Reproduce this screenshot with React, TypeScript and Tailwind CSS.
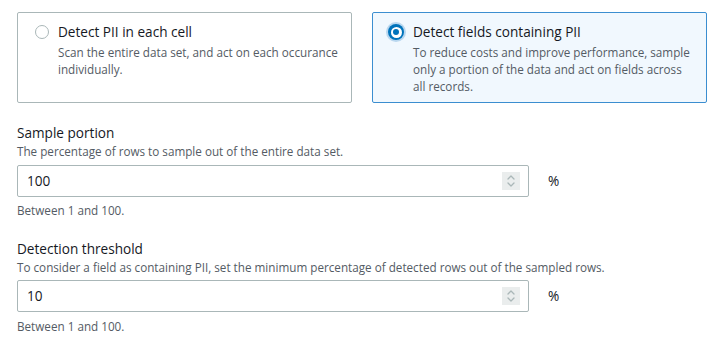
import React from "react";

const font = { fontFamily: '"Open Sans", "Noto Sans", Arial, sans-serif' };

function Spinner() {
  return (
    <div className="flex h-[18px] w-[18px] flex-col items-center justify-center bg-[#eaeded]">
      <svg width="10" height="14" viewBox="0 0 10 14" fill="none" stroke="#aab7b8" strokeWidth="1.3" strokeLinecap="round" strokeLinejoin="round">
        <path d="M2 5 L5 2 L8 5" />
        <path d="M2 9 L5 12 L8 9" />
      </svg>
    </div>
  );
}

function NumberField({ value }: { value: string }) {
  return (
    <div className="flex items-center">
      <div className="flex h-[32px] w-[512px] items-center justify-between rounded-[2px] border border-[#aab7b8] bg-white pl-[9px] pr-[8px]">
        <span className="text-[13.6px] text-[#16191f]">{value}</span>
        <Spinner />
      </div>
      <span className="ml-[19px] text-[13.6px] text-[#16191f]">%</span>
    </div>
  );
}

export default function App() {
  return (
    <div className="h-[347px] w-[725px] bg-white pl-[17px] pt-[12px]" style={font}>
      <div className="flex gap-[20px]">
        <div className="h-[91px] w-[335px] rounded-[2px] border border-[#aab7b8] bg-white pl-[17px] pr-[8px] pt-[9px]">
          <div className="flex items-start gap-[9px]">
            <div className="mt-[3px] h-[14px] w-[14px] shrink-0 rounded-full border border-[#aab7b8] bg-white" />
            <div>
              <div className="text-[13.6px] leading-[20px] text-[#16191f]">Detect PII in each cell</div>
              <div className="mt-[2px] text-[11.7px] leading-[17px] text-[#545b64]">
                Scan the entire data set, and act on each occurance individually.
              </div>
            </div>
          </div>
        </div>
        <div className="h-[91px] w-[335px] rounded-[2px] border border-[#3b8ed0] bg-[#f1f8fe] pl-[13px] pr-[14px] pt-[9px]">
          <div className="flex items-start gap-[7px]">
            <div className="flex h-[20px] w-[20px] shrink-0 items-center justify-center rounded-full bg-[#b9d7ef]">
              <div className="flex h-[16px] w-[16px] items-center justify-center rounded-full bg-[#0073bb]">
                <div className="flex h-[11px] w-[11px] items-center justify-center rounded-full bg-white">
                  <div className="h-[6px] w-[6px] rounded-full bg-[#0073bb]" />
                </div>
              </div>
            </div>
            <div>
              <div className="text-[13.6px] leading-[20px] text-[#16191f]">Detect fields containing PII</div>
              <div className="mt-[2px] text-[11.7px] leading-[17px] text-[#545b64]">
                To reduce costs and improve performance, sample only a portion of the data and act on fields across all records.
              </div>
            </div>
          </div>
        </div>
      </div>

      <div className="mt-[20px] text-[13.6px] leading-[20px] text-[#16191f]">Sample portion</div>
      <div className="text-[11.7px] leading-[16px] text-[#545b64]">The percentage of rows to sample out of the entire data set.</div>
      <div className="mt-[6px]">
        <NumberField value="100" />
      </div>
      <div className="mt-[5px] text-[11.7px] leading-[16px] text-[#545b64]">Between 1 and 100.</div>

      <div className="mt-[21px] text-[13.6px] leading-[20px] text-[#16191f]">Detection threshold</div>
      <div className="text-[11.7px] leading-[16px] text-[#545b64]">
        To consider a field as containing PII, set the minimum percentage of detected rows out of the sampled rows.
      </div>
      <div className="mt-[5px]">
        <NumberField value="10" />
      </div>
      <div className="mt-[6px] text-[11.7px] leading-[16px] text-[#545b64]">Between 1 and 100.</div>
    </div>
  );
}
